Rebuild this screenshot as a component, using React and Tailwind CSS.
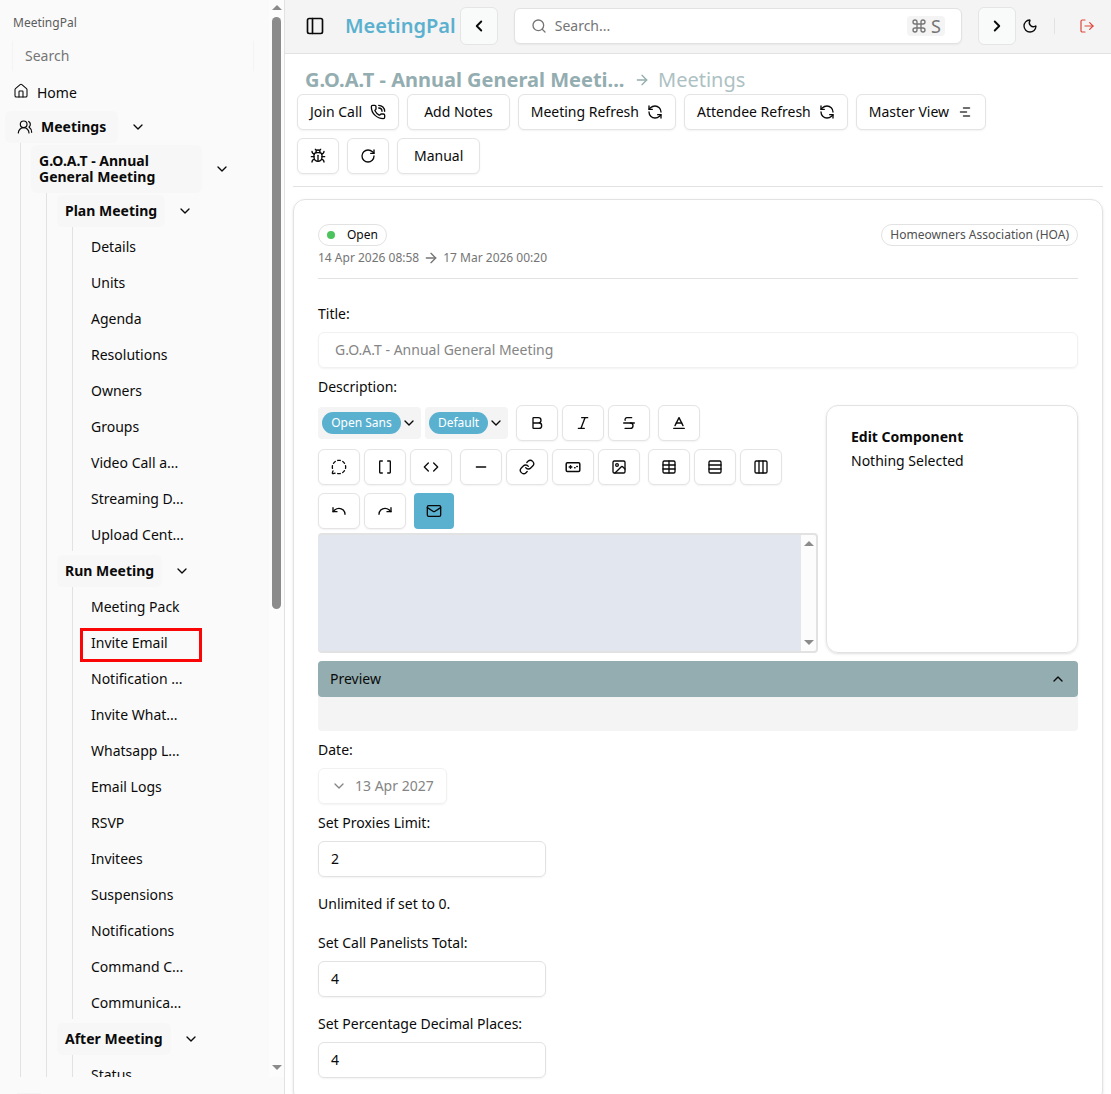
import React from "react";
import {
  ArrowRight, Baseline, Bold, Brackets, Bug, ChevronDown, ChevronLeft, ChevronRight, ChevronUp,
  Code, Columns3, Command, House, Image, Italic, Link, LogOut, Mail, MessageCircleDashed, Minus,
  Moon, PanelLeft, PhoneCall, Redo, RefreshCcw, RotateCw, Rows3, Search, Strikethrough, Table,
  Undo, UsersRound,
} from "lucide-react";

const planItems = ["Details", "Units", "Agenda", "Resolutions", "Owners", "Groups", "Video Call a...", "Streaming D...", "Upload Cent..."];
const runItems = ["Meeting Pack", "Invite Email", "Notification ...", "Invite What...", "Whatsapp L...", "Email Logs", "RSVP", "Invitees", "Suspensions", "Notifications", "Command C...", "Communica..."];

function TreeHeader({ children, label, className = "px-2" }) {
  return (
    <div className="flex items-center">
      <a href="#" className={`flex min-h-8 items-center rounded-md bg-[#f7f7f7] text-sm leading-4 font-bold ${className}`}>
        {children}
      </a>
      <button type="button" aria-label={`Toggle ${label}`} className="flex h-8 w-10 items-center justify-center">
        <ChevronDown size={16} strokeWidth={2} />
      </button>
    </div>
  );
}

function TreeGroup({ title, items, highlighted }) {
  return (
    <li>
      <TreeHeader label={title}>{title}</TreeHeader>
      <ul className="ml-[15px] flex flex-col gap-1 border-l border-[#e2e2e2] pt-1 pl-[10px]">
        {items.map((item) => (
          <li key={item} className="relative">
            <a href="#" className="flex h-8 items-center px-2 text-sm">{item}</a>
            {item === highlighted && (
              <span className="pointer-events-none absolute top-px -left-[3px] h-[34px] w-[122px] border-3 border-[#fb0606]" />
            )}
          </li>
        ))}
      </ul>
    </li>
  );
}

function Triangle({ down = false }) {
  return (
    <svg width="10" height="5" viewBox="0 0 10 5" fill="#8b8b8b" aria-hidden="true">
      {down ? <path d="M0 0h10L5 5z" /> : <path d="M0 5h10L5 0z" />}
    </svg>
  );
}

function Sidebar() {
  return (
    <aside className="flex w-[285px] shrink-0 flex-col border-r border-[#e2e2e2] bg-[#fafafa]">
      <div className="flex min-h-0 flex-1">
        <nav className="min-w-0 flex-1 overflow-hidden pl-[5px]">
          <div className="mt-[7px] flex h-8 items-center px-2 text-xs text-[#5c5c5c]">MeetingPal</div>
          <input
            aria-label="Search menu"
            placeholder="Search"
            className="mt-0.5 ml-[7px] block h-[30px] w-[242px] border-x border-[#f4f4f4] px-3 pb-0.5 text-sm placeholder:text-[#757575]"
          />
          <a href="#" className="mt-[6px] flex h-8 items-center gap-2 px-2 text-sm">
            <House size={16} strokeWidth={1.6} className="mb-1" />
            Home
          </a>
          <ul className="mt-0.5">
            <li>
              <TreeHeader label="Meetings" className="gap-2 px-3">
                <UsersRound size={16} strokeWidth={1.8} />
                Meetings
              </TreeHeader>
              <ul className="ml-[15px] border-l border-[#e2e2e2] pt-0.5 pl-[10px]">
                <li>
                  <TreeHeader label="G.O.A.T" className="w-[171px] px-2 py-2">G.O.A.T - Annual General Meeting</TreeHeader>
                  <ul className="ml-[15px] flex flex-col gap-1 border-l border-[#e2e2e2] pt-0.5 pl-[10px]">
                    <TreeGroup title="Plan Meeting" items={planItems} />
                    <TreeGroup title="Run Meeting" items={runItems} highlighted="Invite Email" />
                    <TreeGroup title="After Meeting" items={["Status"]} />
                  </ul>
                </li>
              </ul>
            </li>
          </ul>
        </nav>
        <div className="flex w-[15px] flex-col items-center bg-[#fcfcfc] pt-[5px] pb-[7px]">
          <Triangle />
          <div className="mt-[7px] h-[592px] w-[9px] rounded-full bg-[#8b8b8b]" />
          <div className="mt-auto"><Triangle down /></div>
        </div>
      </div>
      <div className="px-[17px] pt-4"><div className="h-px w-6 bg-[#f4f4f4]" /></div>
    </aside>
  );
}

function Header() {
  return (
    <header className="flex h-[54px] shrink-0 items-center border-b border-[#e2e2e2] bg-[#f4f4f4] pb-px">
      <button type="button" aria-label="Toggle sidebar" className="ml-5 flex size-5 items-center justify-center">
        <PanelLeft size={20} strokeWidth={2} />
      </button>
      <a href="#" className="ml-5 text-xl font-semibold text-[#5ab1cf]">MeetingPal</a>
      <button type="button" aria-label="Back" className="ml-1 flex size-[38px] shrink-0 items-center justify-center rounded-md border border-[#e5e5e5] bg-[#f9fafa]">
        <ChevronLeft size={18} strokeWidth={2.5} />
      </button>
      <label className="ml-4 flex h-9 min-w-0 flex-1 items-center rounded-md border border-[#e2e2e2] bg-white px-4 text-[#757575] shadow-xs">
        <Search size={16} strokeWidth={2} />
        <input aria-label="Search" placeholder="Search..." className="ml-2 min-w-0 flex-1 text-sm outline-none placeholder:text-[#757575]" />
        <kbd className="flex h-5 items-center gap-1 rounded-sm bg-[#f4f4f4] px-1 font-['Noto_Sans'] text-lg">
          <Command size={16} strokeWidth={2} />S
        </kbd>
      </label>
      <button type="button" aria-label="Forward" className="ml-4 flex size-[38px] shrink-0 items-center justify-center rounded-md border border-[#e5e5e5] bg-[#f9fafa]">
        <ChevronRight size={18} strokeWidth={2.5} />
      </button>
      <button type="button" aria-label="Dark mode" className="ml-[6px] flex size-4 items-center justify-center">
        <Moon size={16} strokeWidth={2} />
      </button>
      <div className="ml-4 h-4 w-px bg-[#e2e2e2]" />
      <button type="button" aria-label="Log out" className="mr-4 ml-6 flex size-4 items-center justify-center text-[#e0443a]">
        <LogOut size={16} strokeWidth={1.8} />
      </button>
    </header>
  );
}

function Button({ children, label, className = "px-3" }) {
  return (
    <button type="button" aria-label={label} className={`flex h-9 items-center justify-center gap-2 rounded-md border border-[#e4e4e4] bg-white text-sm whitespace-nowrap shadow-xs ${className}`}>
      {children}
    </button>
  );
}

function Tool({ icon: Icon, label }) {
  return <Button label={label} className="w-[42px]"><Icon size={16} strokeWidth={2} /></Button>;
}

function MasterIcon() {
  return (
    <svg width="16" height="16" viewBox="0 0 16 16" stroke="#404040" strokeWidth="1.5" strokeLinecap="round" aria-hidden="true">
      <path d="M6.500 4h6M3.500 8h6M6.500 12h6" />
    </svg>
  );
}

function FieldIcon() {
  return (
    <svg width="16" height="16" viewBox="0 0 16 16" fill="none" stroke="currentColor" strokeWidth="1.5" strokeLinecap="round" strokeLinejoin="round" aria-hidden="true">
      <rect x="1.2" y="3.7" width="13.6" height="8.8" rx="1.2" />
      <path d="M4.200 8h2.600M5.500 6.800v2.400M9.600 8.700h.5M11.800 7.400h.5" />
    </svg>
  );
}

function PillSelect({ label, value, width }) {
  return (
    <div className="flex h-8 items-center rounded-sm bg-[#f4f4f4] pr-1 pl-1">
      <select aria-label={label} defaultValue={value} className={`h-[22px] appearance-none rounded-full bg-[#5ab1cf] text-center text-xs text-white ${width}`}>
        <option>{value}</option>
      </select>
      <ChevronDown size={16} strokeWidth={2} />
    </div>
  );
}

function NumberField({ id, label, value }) {
  return (
    <div>
      <label htmlFor={id} className="block text-sm">{label}</label>
      <input id={id} defaultValue={value} className="mt-2 block h-9 w-[228px] rounded-md border border-[#e2e2e2] px-3 pb-0.5 text-sm shadow-xs" />
    </div>
  );
}

function Editor() {
  return (
    <div className="mt-2 flex gap-2">
      <div className="min-w-0 flex-1">
        <div className="flex flex-wrap items-center gap-2">
          <div className="flex gap-1">
            <PillSelect label="Font" value="Open Sans" width="w-[79px]" />
            <PillSelect label="Size" value="Default" width="w-[59px]" />
          </div>
          <div className="flex gap-1">
            <Tool icon={Bold} label="Bold" />
            <Tool icon={Italic} label="Italic" />
            <Tool icon={Strikethrough} label="Strikethrough" />
          </div>
          <Tool icon={Baseline} label="Text colour" />
          <div className="flex gap-1">
            <Tool icon={MessageCircleDashed} label="Comment" />
            <Tool icon={Brackets} label="Variable" />
            <Tool icon={Code} label="Code" />
          </div>
          <div className="flex gap-1">
            <Tool icon={Minus} label="Divider" />
            <Tool icon={Link} label="Link" />
            <Button label="Field" className="w-[42px]"><FieldIcon /></Button>
            <Tool icon={Image} label="Image" />
          </div>
          <div className="flex gap-1">
            <Tool icon={Table} label="Table" />
            <Tool icon={Rows3} label="Rows" />
            <Tool icon={Columns3} label="Columns" />
          </div>
          <div className="flex gap-1">
            <Tool icon={Undo} label="Undo" />
            <Tool icon={Redo} label="Redo" />
          </div>
          <button type="button" aria-label="Email" className="flex h-9 w-10 items-center justify-center rounded-sm bg-[#5ab1cf]">
            <Mail size={16} strokeWidth={2} />
          </button>
        </div>
        <div className="mt-1 flex h-[120px] overflow-hidden rounded-sm border-2 border-l-0 border-[#e2e2e2] bg-[#e2e6ee]">
          <div className="flex-1" />
          <div className="flex w-[15px] flex-col items-center justify-between bg-[#fcfcfc] py-[6px]">
            <Triangle />
            <Triangle down />
          </div>
        </div>
      </div>
      <section className="w-[252px] shrink-0 rounded-xl border border-[#e2e2e2] px-6 py-[19px] text-sm leading-6 shadow-sm">
        <h2 className="font-bold">Edit Component</h2>
        <p>Nothing Selected</p>
      </section>
    </div>
  );
}

export default function App() {
  return (
    <div className="flex h-screen overflow-hidden bg-white font-['Noto_Sans',sans-serif] text-[#0a0a0a]">
      <Sidebar />
      <div className="flex min-w-0 flex-1 flex-col">
        <Header />
        <main className="min-h-0 flex-1 overflow-hidden px-2">
          <div className="mt-3 flex h-7 items-center px-3 text-xl text-[#93adb0]">
            <h1 className="w-[321px] font-bold whitespace-nowrap">G.O.A.T - Annual General Meeti...</h1>
            <ArrowRight className="mx-2" size={16} strokeWidth={2} />
            <a href="#" className="text-[#adc1c3]">Meetings</a>
          </div>
          <div className="flex flex-col gap-2 border-b border-[#e2e2e2] px-1 pb-3">
            <div className="flex flex-wrap gap-2">
              <Button>Join Call <PhoneCall size={16} strokeWidth={2} /></Button>
              <Button className="px-4">Add Notes</Button>
              <Button>Meeting Refresh <RefreshCcw size={16} strokeWidth={2} /></Button>
              <Button>Attendee Refresh <RefreshCcw size={16} strokeWidth={2} /></Button>
              <Button>Master View <MasterIcon /></Button>
            </div>
            <div className="flex flex-wrap gap-2">
              <Tool icon={Bug} label="Report bug" />
              <Tool icon={RotateCw} label="Reload" />
              <Button className="px-4">Manual</Button>
            </div>
          </div>
          <div className="mt-3 rounded-xl border border-[#e2e2e2] p-6 shadow-sm">
            <div className="flex items-start justify-between">
              <div className="text-xs">
                <span className="flex h-[22px] w-fit items-center gap-3 rounded-full border border-[#e2e2e2] px-2">
                  <span className="size-2 rounded-full bg-[#4cc35c]" />
                  Open
                </span>
                <div className="mt-1 flex items-center gap-1 text-[#757575]">
                  14 Apr 2026 08:58 <ArrowRight size={16} strokeWidth={2} /> 17 Mar 2026 00:20
                </div>
              </div>
              <span className="flex h-[22px] items-center rounded-full border border-[#e2e2e2] px-2 text-xs text-[#505050]">Homeowners Association (HOA)</span>
            </div>
            <hr className="mt-3 border-[#e2e2e2]" />
            <label htmlFor="title" className="mt-[25px] block text-sm">Title:</label>
            <input id="title" disabled defaultValue="G.O.A.T - Annual General Meeting" className="mt-2 block h-9 w-full rounded-md border border-[#f1f1f1] px-4 pb-0.5 text-sm text-[#858585] shadow-xs" />
            <div className="mt-[9px] text-sm">Description:</div>
            <Editor />
            <section className="mt-2 rounded-sm bg-[#f4f4f4] text-sm">
              <button type="button" className="flex h-9 w-full items-center justify-between rounded-sm bg-[#93adb0] px-3">
                Preview <ChevronUp size={16} strokeWidth={2} />
              </button>
              <div className="h-[34px]" />
            </section>
            <div className="mt-[9px] text-sm">Date:</div>
            <button type="button" disabled className="mt-2 flex h-9 items-center gap-2 rounded-md border border-[#f1f1f1] px-3 text-sm text-[#858585] shadow-xs">
              <ChevronDown size={16} strokeWidth={2} />
              13 Apr 2027
            </button>
            <div className="mt-[9px]"><NumberField id="proxies" label="Set Proxies Limit:" value="2" /></div>
            <p className="mt-[17px] text-sm">Unlimited if set to 0.</p>
            <div className="mt-[19px] flex flex-col gap-[17px]">
              <NumberField id="panelists" label="Set Call Panelists Total:" value="4" />
              <NumberField id="decimals" label="Set Percentage Decimal Places:" value="4" />
            </div>
          </div>
        </main>
      </div>
    </div>
  );
}
